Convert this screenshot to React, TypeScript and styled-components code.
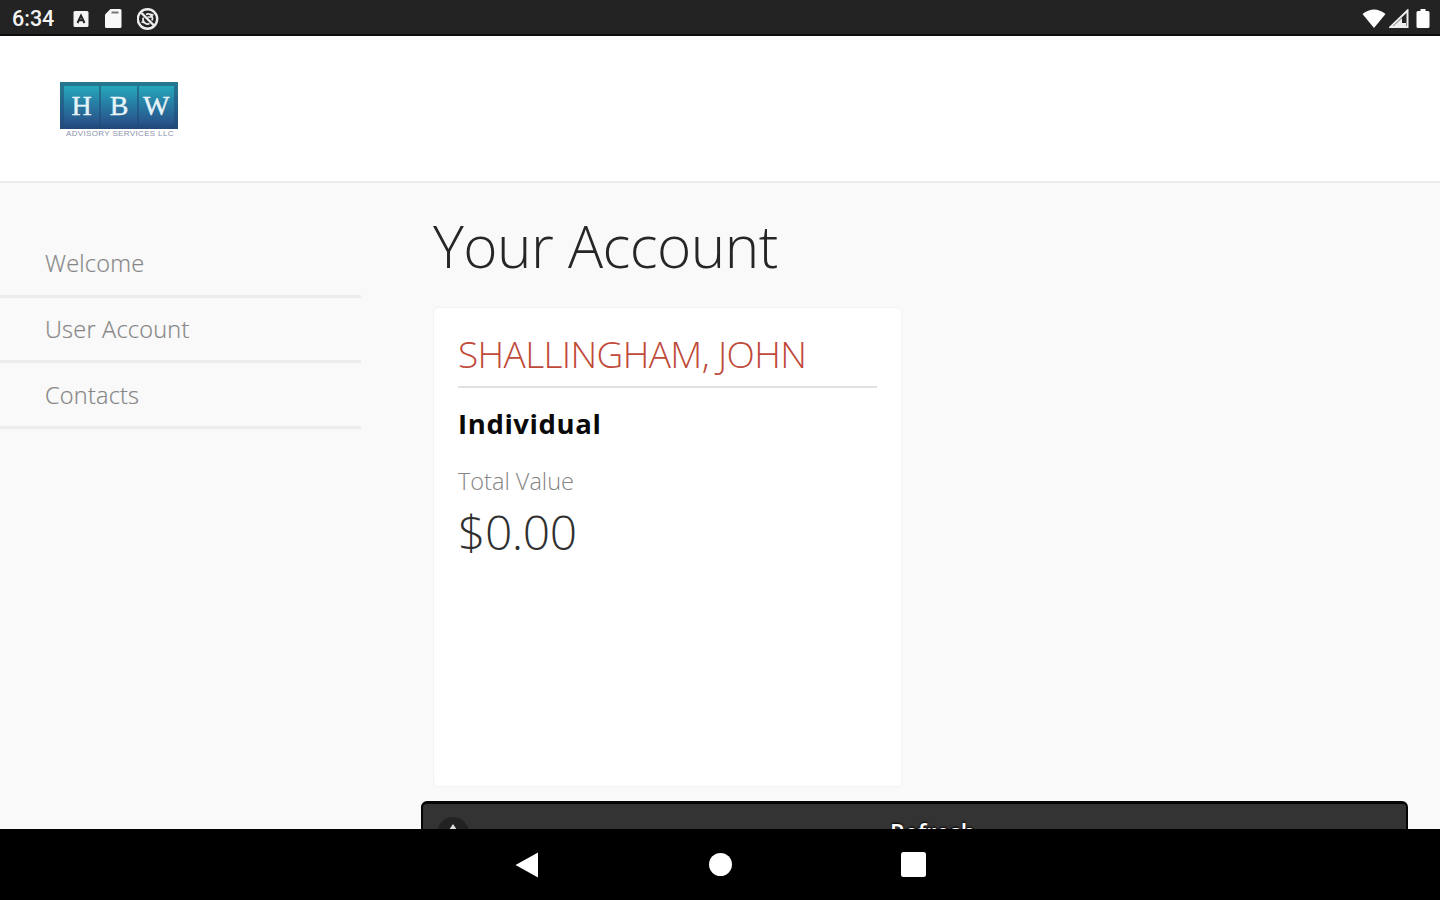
import React from "react";
import styled, { createGlobalStyle } from "styled-components";

const GlobalStyle = createGlobalStyle`
  body { margin: 0; font-family: "Open Sans", "Noto Sans", sans-serif; }
  *, *::before, *::after { box-sizing: border-box; }
`;

const Screen = styled.div`
  display: flex;
  flex-direction: column;
  width: 1440px;
  height: 900px;
  overflow: hidden;
  background: #f9f9f9;
`;

const StatusBar = styled.div`
  flex: none;
  display: flex;
  align-items: center;
  justify-content: space-between;
  height: 36px;
  padding: 3px 7px 0 12px;
  background: #232323;
  border-bottom: 2px solid #0c0c0c;
`;

const StatusGroup = styled.div<{ $gap: number }>`
  display: flex;
  align-items: center;
  gap: ${(p) => p.$gap}px;
`;

const Clock = styled.span`
  width: 46px;
  color: #f4f4f4;
  font: 500 21.5px/24px Roboto, sans-serif;
  white-space: nowrap;
`;

const Header = styled.header`
  flex: none;
  height: 147px;
  padding: 46px 0 0 60px;
  background: #fff;
  border-bottom: 2px solid #eaeaea;
`;

const Logo = styled.div`
  width: 118px;
`;

const LogoTiles = styled.div`
  display: grid;
  grid-template-columns: repeat(3, 1fr);
  gap: 2px;
  height: 47px;
  padding: 4px;
  background: linear-gradient(#26798f, #23618c 50%, #22487a);
`;

const LogoTile = styled.span`
  display: flex;
  align-items: center;
  justify-content: center;
  background: linear-gradient(#25a9bd, #277ea5 45%, #285088);
  color: #e6f3f8;
  font: 400 28px/38px "Liberation Serif", serif;
  -webkit-text-stroke: 0.4px #e6f3f8;
`;

const LogoCaption = styled.div`
  margin: 0 0 0 6px;
  color: #8a92ac;
  font: 400 8px/9px "Liberation Sans", sans-serif;
  letter-spacing: 0.35px;
  white-space: nowrap;
`;

const Body = styled.div`
  flex: 1;
  min-height: 0;
  display: flex;
  overflow: hidden;
`;

const SideNav = styled.nav`
  flex: none;
  width: 361px;
  padding-top: 49px;
`;

const NavItem = styled.a`
  display: flex;
  align-items: center;
  height: 65.7px;
  padding: 0 0 0 45px;
  border-bottom: 3px solid #ececec;
  color: #868686;
  font-size: 23.5px;
  font-weight: 300;
  line-height: 32px;
  letter-spacing: 0.22px;
  -webkit-text-stroke: 0.2px #868686;
`;

const Main = styled.main`
  flex: none;
  width: 987px;
  margin-left: 60px;
`;

const Title = styled.h1`
  margin: 0;
  padding: 22px 0 0 12px;
  height: 124px;
  color: #262626;
  font-size: 58.5px;
  font-weight: 300;
  line-height: 80px;
  letter-spacing: -0.55px;
`;

const Card = styled.section`
  width: 469px;
  height: 480px;
  margin: 0 0 14px 12px;
  padding: 23px 24px 0 24px;
  background: #fff;
  border: 1px solid #f3f3f3;
  border-radius: 5px;
`;

const Owner = styled.h2`
  margin: 0;
  height: 57px;
  border-bottom: 2px solid #e0e0e0;
  color: #bf4a3a;
  font-size: 37px;
  font-weight: 300;
  line-height: 46px;
  letter-spacing: -0.62px;
  white-space: nowrap;
`;

const AccountType = styled.div`
  height: 40px;
  margin-top: 16px;
  color: #0a0a0a;
  font-size: 27.5px;
  font-weight: 700;
  line-height: 40px;
  letter-spacing: 0.6px;
`;

const Label = styled.div`
  height: 32px;
  margin-top: 21px;
  color: #858585;
  font-size: 23.5px;
  font-weight: 300;
  line-height: 32px;
`;

const Amount = styled.div`
  margin-top: 2px;
  color: #303030;
  font-size: 48px;
  font-weight: 300;
  line-height: 66px;
  letter-spacing: -0.5px;
`;

const RefreshButton = styled.button`
  display: flex;
  align-items: flex-start;
  width: 987px;
  height: 80px;
  padding: 11px 0 0 14px;
  border: 2px solid #050505;
  border-top-width: 3px;
  border-radius: 6px;
  background: #333;
`;

const RefreshBadge = styled.span`
  display: flex;
  justify-content: center;
  width: 32px;
  height: 32px;
  margin-top: 2px;
  padding-top: 5px;
  border-radius: 50%;
  background: #222;
`;

const RefreshText = styled.span`
  margin: 1px 0 0 421px;
  color: #fff;
  font: 600 23px/32px "Open Sans", sans-serif;
  text-shadow: 0 -1px 2px #000;
`;

const NavBar = styled.footer`
  flex: none;
  display: flex;
  align-items: center;
  justify-content: center;
  height: 71px;
  padding-left: 1px;
  gap: 168px;
  background: #000;
`;

const NAV = ["Welcome", "User Account", "Contacts"];

export default function App() {
  return (
    <>
      <GlobalStyle />
      <Screen>
        <StatusBar>
          <StatusGroup $gap={15}>
            <Clock>6:34</Clock>
            <svg width="16" height="20" viewBox="0 0 16 20">
              <rect x="0.500" y="2" width="15" height="16" rx="1.500" fill="#f4f4f4" />
              <path d="M4.500 14 8 6.500 11.500 14M6 11.300h4" fill="none" stroke="#232323" strokeWidth="2" />
            </svg>
            <svg width="18" height="20" viewBox="0 0 18 20">
              <path d="M6.500 0H16q1.500 0 1.500 1.500v16q0 1.500-1.500 1.500H2.500Q1 19 1 17.500V5.500z" fill="#f8f8f8" />
              <path d="M7.500 3.500h7" stroke="#777" strokeWidth="2" />
            </svg>
            <svg width="24" height="24" viewBox="0 0 24 24" fill="none" stroke="#eee">
              <circle cx="10.500" cy="12" r="9.700" strokeWidth="2.400" />
              <g transform="translate(-1.500 0)">
                <path d="m6 6 12.500 12.500" strokeWidth="2.400" />
                <path d="M8 10.500a4.500 4.500 0 0 0 6 6M10.500 7.500a4.500 4.500 0 0 1 6 6M14 7l4 1M6 15l4 1M12 10h4" strokeWidth="1.700" />
              </g>
            </svg>
          </StatusGroup>
          <StatusGroup $gap={3}>
            <svg width="24" height="20" viewBox="0 0 24 20">
              <path d="M0.500 5Q12-4 23.500 5L12 19z" fill="#fff" />
            </svg>
            <svg width="20" height="20" viewBox="0 0 20 20">
              <path d="M1.500 18 18.500 1.500V18z" fill="none" stroke="#eee" strokeWidth="2" />
              <path d="M4 17.500 13 9V14h4v3.500z" fill="#eee" />
            </svg>
            <svg width="21" height="20" viewBox="0 0 21 20">
              <path d="M8.500 0h5v2H16q1.500 0 1.500 1.500v14q0 1.500-1.500 1.500H6q-1.500 0-1.500-1.500v-14Q4.500 2 6 2h2.500z" fill="#fff" />
            </svg>
          </StatusGroup>
        </StatusBar>
        <Header>
          <Logo>
            <LogoTiles>
              <LogoTile>H</LogoTile>
              <LogoTile>B</LogoTile>
              <LogoTile>W</LogoTile>
            </LogoTiles>
            <LogoCaption>ADVISORY SERVICES LLC</LogoCaption>
          </Logo>
        </Header>
        <Body>
          <SideNav>
            {NAV.map((item) => (
              <NavItem key={item}>{item}</NavItem>
            ))}
          </SideNav>
          <Main>
            <Title>Your Account</Title>
            <Card>
              <Owner>SHALLINGHAM, JOHN</Owner>
              <AccountType>Individual</AccountType>
              <Label>Total Value</Label>
              <Amount>$0.00</Amount>
            </Card>
            <RefreshButton>
              <RefreshBadge>
                <svg width="22" height="22" viewBox="0 0 22 22">
                  <path d="M7 8 11 2l4 6z" fill="#ddd" />
                </svg>
              </RefreshBadge>
              <RefreshText>Refresh</RefreshText>
            </RefreshButton>
          </Main>
        </Body>
        <NavBar>
          <svg width="24" height="28" viewBox="0 0 24 28">
            <path d="M0.500 14 23 1.500V26.500z" fill="#fff" />
          </svg>
          <svg width="26" height="24" viewBox="0 0 26 24">
            <circle cx="13.500" cy="11.500" r="11.500" fill="#fff" />
          </svg>
          <svg width="26" height="26" viewBox="0 0 26 26">
            <rect x="0" y="0" width="25" height="25" rx="2.500" fill="#fff" />
          </svg>
        </NavBar>
      </Screen>
    </>
  );
}
